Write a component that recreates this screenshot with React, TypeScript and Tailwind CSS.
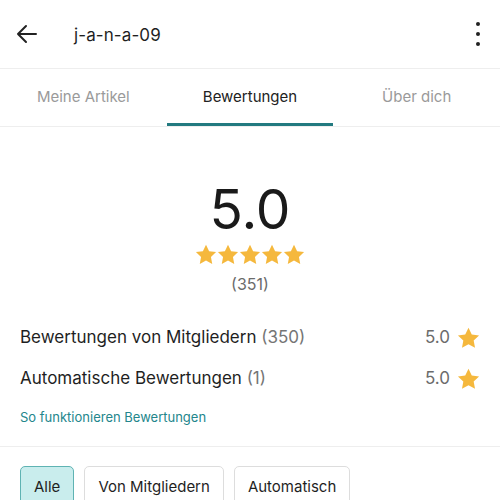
import React from "react";

const Star = ({ size = 20 }: { size?: number }) => (
    <svg width={size} height={size} viewBox="0 0 24 24" className="fill-[#f5b83d]">
        <path d="M12 .8l3.4 7 7.6 1-5.6 5.3 1.4 7.6L12 18l-6.8 3.7 1.4-7.6L1 8.8l7.6-1z" />
    </svg>
);

export default function App() {
    const tabs = ["Meine Artikel", "Bewertungen", "Über dich"];

    return (
        <div className="w-[500px] h-[500px] overflow-hidden bg-white font-['Inter',sans-serif] text-[#1f1f1f]">
            <div className="h-[69px] flex items-center justify-between pl-[15px] pr-[20px] border-b border-[#eeeeee]">
                <div className="flex items-center">
                    <svg width="24" height="24" viewBox="0 0 24 24" fill="none" stroke="#222" strokeWidth="2" strokeLinecap="round" strokeLinejoin="round">
                        <path d="M21 12H3M11 4l-8 8 8 8" />
                    </svg>
                    <span className="ml-[35px] mt-[3px] text-[17px] tracking-[0.1px]">j-a-n-a-09</span>
                </div>
                <div className="flex flex-col gap-[6px] items-center">
                    <span className="w-[4px] h-[4px] rounded-full bg-[#222]" />
                    <span className="w-[4px] h-[4px] rounded-full bg-[#222]" />
                    <span className="w-[4px] h-[4px] rounded-full bg-[#222]" />
                </div>
            </div>

            <div className="flex h-[58px] border-b border-[#eeeeee]">
                {tabs.map((t, i) => (
                    <div
                        key={t}
                        className={`flex-1 flex items-center justify-center pt-[3px] text-[15px] border-b-[3px] ${i === 1 ? "text-[#222] border-[#237a80]" : "text-[#9a9a9a] border-transparent"}`}
                    >
                        {t}
                    </div>
                ))}
            </div>

            <div className="flex flex-col items-center pt-[52px]">
                <div className="text-[55px] leading-[60px] text-[#1a1a1a]">5.0</div>
                <div className="flex gap-0 mt-[5px]">
                    <Star size={22} />
                    <Star size={22} />
                    <Star size={22} />
                    <Star size={22} />
                    <Star size={22} />
                </div>
                <div className="text-[16px] text-[#6b6b6b] mt-[6px]">(351)</div>
            </div>

            <div className="px-[20px] pt-[26px]">
                <div className="flex items-center justify-between h-[32px]">
                    <span className="text-[17px]">
                        Bewertungen von Mitgliedern <span className="text-[#757575]">(350)</span>
                    </span>
                    <span className="flex items-center gap-[7px] text-[17px] text-[#6b6b6b]">
                        5.0 <Star size={23} />
                    </span>
                </div>
                <div className="flex items-center justify-between h-[32px] mt-[9px]">
                    <span className="text-[17px]">
                        Automatische Bewertungen <span className="text-[#757575]">(1)</span>
                    </span>
                    <span className="flex items-center gap-[7px] text-[17px] text-[#6b6b6b]">
                        5.0 <Star size={23} />
                    </span>
                </div>
                <div className="text-[13px] text-[#23868c] mt-[13px]">So funktionieren Bewertungen</div>
            </div>

            <div className="border-b border-[#eeeeee] mt-[18px]" />

            <div className="flex gap-[10px] px-[20px] pt-[19px]">
                <div className="h-[44px] px-[13px] flex items-center rounded-[5px] border border-[#5fb3b3] bg-[#c9eded] text-[15px]">Alle</div>
                <div className="h-[44px] px-[13px] flex items-center rounded-[5px] border border-[#dddddd] text-[15px]">Von Mitgliedern</div>
                <div className="h-[44px] px-[13px] flex items-center rounded-[5px] border border-[#dddddd] text-[15px]">Automatisch</div>
            </div>
        </div>
    );
}
